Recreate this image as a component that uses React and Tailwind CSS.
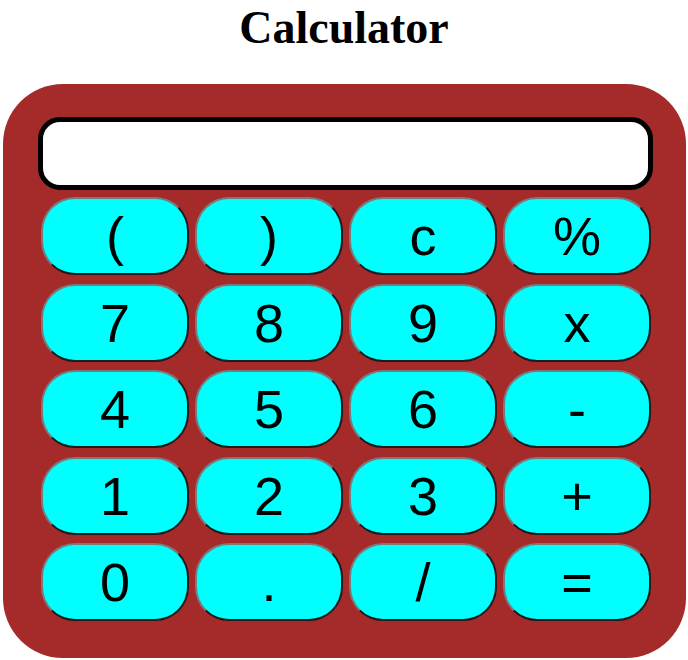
const keys = [
  '(', ')', 'c', '%',
  '7', '8', '9', 'x',
  '4', '5', '6', '-',
  '1', '2', '3', '+',
  '0', '.', '/', '=',
];

export default function App() {
  return (
    <div className="min-h-[660px] bg-white font-['Liberation_Sans',Arial,sans-serif]">
      <h1 className="pt-[5px] text-center font-['Liberation_Serif','Times_New_Roman',serif] text-[46px] leading-[46px] font-bold text-black">
        Calculator
      </h1>
      <div className="mt-[33px] ml-[3px] w-[683px] h-[574px] rounded-[60px] bg-[#a52a2a] pt-[33px] pl-[35px]">
        <div className="w-[615px] h-[73px] rounded-[22px] border-[5px] border-black bg-white" />
        <div className="mt-[7px] ml-[3px] grid w-[610px] grid-cols-4 gap-x-[6px] gap-y-[8.5px]">
          {keys.map((k) => (
            <button
              key={k}
              className="flex h-[78px] items-center justify-center rounded-[34px] border-2 border-t-[#7a7a7a] border-l-[#7a7a7a] border-b-[#1a1a1a] border-r-[#1a1a1a] bg-[#00ffff] text-[54px] leading-none text-black"
            >
              {k}
            </button>
          ))}
        </div>
      </div>
    </div>
  );
}
